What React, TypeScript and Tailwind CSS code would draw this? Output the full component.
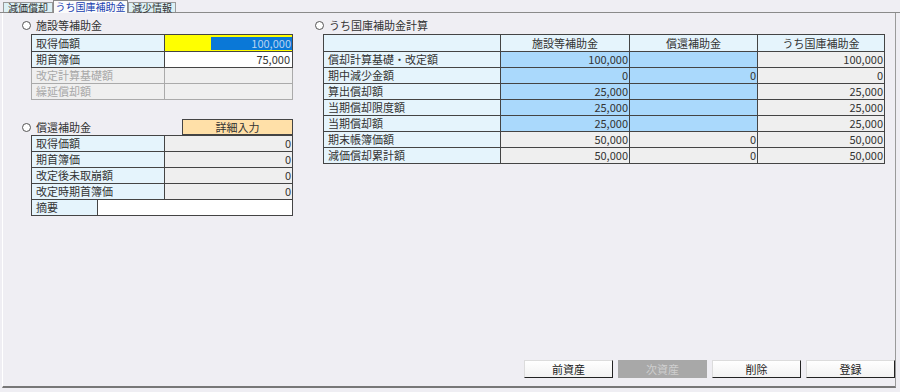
import React from 'react';

const FONT = { fontFamily: '"Noto Sans CJK JP", "Noto Sans", sans-serif' };

type Cell = { v: string; tone: 'blue' | 'gray' | 'white' };

const calcRows: { label: string; cells: Cell[] }[] = [
  { label: '償却計算基礎・改定額', cells: [{ v: '100,000', tone: 'blue' }, { v: '', tone: 'blue' }, { v: '100,000', tone: 'gray' }] },
  { label: '期中減少金額', cells: [{ v: '0', tone: 'blue' }, { v: '0', tone: 'blue' }, { v: '0', tone: 'gray' }] },
  { label: '算出償却額', cells: [{ v: '25,000', tone: 'blue' }, { v: '', tone: 'blue' }, { v: '25,000', tone: 'gray' }] },
  { label: '当期償却限度額', cells: [{ v: '25,000', tone: 'blue' }, { v: '', tone: 'blue' }, { v: '25,000', tone: 'gray' }] },
  { label: '当期償却額', cells: [{ v: '25,000', tone: 'blue' }, { v: '', tone: 'blue' }, { v: '25,000', tone: 'gray' }] },
  { label: '期末帳簿価額', cells: [{ v: '50,000', tone: 'gray' }, { v: '0', tone: 'gray' }, { v: '50,000', tone: 'gray' }] },
  { label: '減価償却累計額', cells: [{ v: '50,000', tone: 'gray' }, { v: '0', tone: 'gray' }, { v: '50,000', tone: 'gray' }] },
];

const toneClass = {
  blue: 'bg-[#aad9fc]',
  gray: 'bg-[#efefef]',
  white: 'bg-white',
};

const Radio: React.FC<{ label: string }> = ({ label }) => (
  <div className="flex items-center h-[16px] text-[11px] text-[#333]">
    <span className="w-[9px] h-[9px] rounded-full border border-[#555] bg-white ml-[1px]" />
    <span className="ml-[5px]">{label}</span>
  </div>
);

const Tab: React.FC<{ label: string; active?: boolean }> = ({ label, active }) => (
  <div
    className={
      (active
        ? 'h-[13px] text-[#2040b0] bg-[#fbfbfb] border-[#8a8a8a] -mb-[1px] relative z-10'
        : 'h-[10px] text-[#333] bg-[#dcf0f5] border-[#9a9a9a]') +
      ' w-full flex items-center justify-center whitespace-nowrap text-[10px] leading-none border border-b-0'
    }
  >
    {label}
  </div>
);

const BtnFace: React.FC<{ label: string; disabled?: boolean; w: string }> = ({ label, disabled, w }) => (
  <div
    className={
      (disabled
        ? 'bg-[#a8a8a8] text-[#cfcfcf] border-[#a8a8a8]'
        : 'bg-gradient-to-b from-white to-[#f2f2f2] text-[#222] border-t-[#dcdcdc] border-l-[#dcdcdc] border-r-[#222] border-b-[#222]') +
      ' h-[18px] border flex items-center justify-center text-[11px] ' + w
    }
  >
    {label}
  </div>
);

export default function App() {
  return (
    <div style={FONT} className="w-[900px] h-[392px] bg-[#efeef3] flex flex-col overflow-hidden">
      {/* tabs */}
      <div className="h-[13px] flex items-end pl-[3px] border-b border-[#8a8a8a]">
        <div className="w-[50px]"><Tab label="減価償却" /></div>
        <div className="w-[75px]"><Tab label="うち国庫補助金" active /></div>
        <div className="w-[48px]"><Tab label="減少情報" /></div>
      </div>

      <div className="flex-1 flex flex-col border-l border-l-[#ffffff] border-r border-r-[#9a9a9a] border-b-2 border-b-[#777] mr-[4px] ml-[2px] mb-[4px]">
        <div className="flex pt-[4px]">
          {/* left column */}
          <div className="w-[272px] ml-[18px] flex flex-col">
            <Radio label="施設等補助金" />
            <table className="ml-[10px] mt-[1px] w-[262px] border-collapse text-[11px] table-fixed">
              <tbody>
                <tr className="h-[17px]">
                  <td className="w-[133px] bg-[#e5f4fc] border border-[#444] pl-[4px] text-[#333] leading-none">取得価額</td>
                  <td className="bg-[#ffff00] border border-[#444] p-0 leading-none">
                    <div className="flex justify-end">
                      <span className="w-[81px] h-[13px] bg-[#0a78d7] text-[#b9d3f0] text-right pr-[1px] leading-[13px]">100,000</span>
                    </div>
                  </td>
                </tr>
                <tr className="h-[16px]">
                  <td className="bg-[#e5f4fc] border border-[#444] pl-[4px] text-[#333] leading-none">期首簿価</td>
                  <td className="bg-white border border-[#444] text-right pr-[2px] text-[#333] leading-none">75,000</td>
                </tr>
                <tr className="h-[16px]">
                  <td className="bg-[#efefef] border border-[#aaa] pl-[4px] text-[#a8a8a8] leading-none">改定計算基礎額</td>
                  <td className="bg-[#efefef] border border-[#aaa]"></td>
                </tr>
                <tr className="h-[16px]">
                  <td className="bg-[#efefef] border border-[#aaa] pl-[4px] text-[#a8a8a8] leading-none">繰延償却額</td>
                  <td className="bg-[#efefef] border border-[#aaa]"></td>
                </tr>
              </tbody>
            </table>

            <div className="mt-[19px] flex items-end justify-between h-[16px]">
              <Radio label="償還補助金" />
              <div className="w-[111px] h-[16px] bg-[#ffe0a8] border border-[#444] flex items-center justify-center text-[11px] text-[#333] leading-none">
                詳細入力
              </div>
            </div>
            <table className="ml-[10px] w-[262px] border-collapse text-[11px] table-fixed">
              <tbody>
                {['取得価額', '期首簿価', '改定後未取崩額', '改定時期首簿価'].map((l) => (
                  <tr key={l} className="h-[16px]">
                    <td className="w-[133px] bg-[#e5f4fc] border border-[#444] pl-[4px] text-[#333] leading-none">{l}</td>
                    <td className="bg-[#efefef] border border-[#444] text-right pr-[1px] text-[#333] leading-none">0</td>
                  </tr>
                ))}
              </tbody>
            </table>
            <div className="ml-[10px] w-[262px] h-[16px] flex border border-t-0 border-[#444] text-[11px]">
              <div className="w-[66px] bg-[#e5f4fc] border-r border-[#444] pl-[4px] text-[#333] flex items-center leading-none">摘要</div>
              <div className="flex-1 bg-white" />
            </div>
          </div>

          {/* right column */}
          <div className="ml-[21px] flex flex-col">
            <Radio label="うち国庫補助金計算" />
            <table className="ml-[9px] mt-[1px] w-[562px] border-collapse text-[11px] table-fixed">
              <thead>
                <tr className="h-[17px]">
                  <th className="w-[177px] bg-[#e5f4fc] border border-[#444] font-normal"></th>
                  <th className="w-[129px] bg-[#e5f4fc] border border-[#444] font-normal text-[#333] leading-none">施設等補助金</th>
                  <th className="w-[128px] bg-[#e5f4fc] border border-[#444] font-normal text-[#333] leading-none">償還補助金</th>
                  <th className="bg-[#e5f4fc] border border-[#444] font-normal text-[#333] leading-none">うち国庫補助金</th>
                </tr>
              </thead>
              <tbody>
                {calcRows.map((r) => (
                  <tr key={r.label} className="h-[16px]">
                    <td className="bg-[#e5f4fc] border border-[#444] pl-[4px] text-[#333] leading-none">{r.label}</td>
                    {r.cells.map((c, i) => (
                      <td key={i} className={toneClass[c.tone] + ' border border-[#444] text-right pr-[1px] text-[#333] leading-none'}>
                        {c.v}
                      </td>
                    ))}
                  </tr>
                ))}
              </tbody>
            </table>
          </div>
        </div>

        <div className="mt-auto mb-[8px] flex justify-end gap-[5px] pr-[0px]">
          <BtnFace label="前資産" w="w-[89px]" />
          <BtnFace label="次資産" disabled w="w-[89px]" />
          <BtnFace label="削除" w="w-[89px]" />
          <BtnFace label="登録" w="w-[89px]" />
        </div>
      </div>
    </div>
  );
}
